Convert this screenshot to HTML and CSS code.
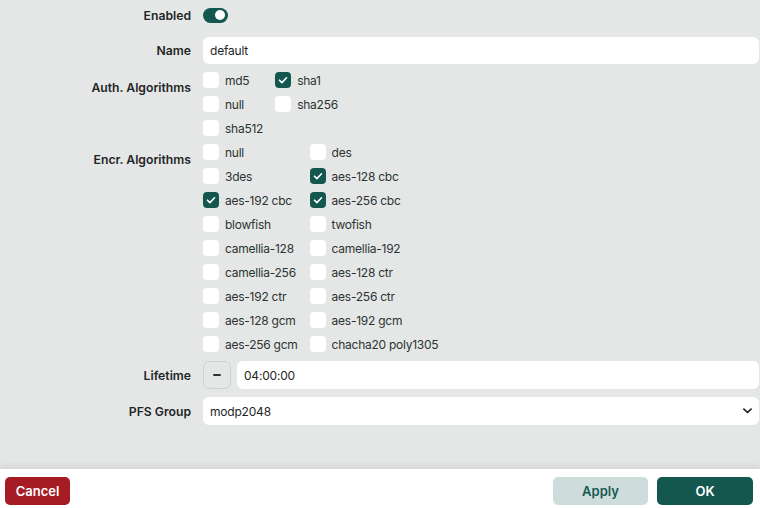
FILE: index.html
```html
<!DOCTYPE html>
<html>
<head>
<meta charset="utf-8">
<link rel="stylesheet" href="styles.css">
</head>
<body>
<div class="page">
  <form class="form">
    <div class="label lbl-mid">Enabled</div>
    <div class="ctl ctl-toggle"><span class="toggle"><span class="knob"></span></span></div>

    <div class="label lbl-mid">Name</div>
    <div class="ctl"><div class="input">default</div></div>

    <div class="label lbl-top">Auth. Algorithms</div>
    <div class="ctl">
      <div class="checks">
        <label class="chk"><span class="box"></span>md5</label>
        <label class="chk"><span class="box on"><svg viewBox="0 0 16 16"><path d="M4.5 8.2l2.4 2.4 4.6-4.8"/></svg></span>sha1</label>
        <label class="chk"><span class="box"></span>null</label>
        <label class="chk"><span class="box"></span>sha256</label>
        <label class="chk"><span class="box"></span>sha512</label>
      </div>
    </div>

    <div class="label lbl-top">Encr. Algorithms</div>
    <div class="ctl ctl-encr">
      <div class="checks">
        <label class="chk"><span class="box"></span>null</label>
        <label class="chk"><span class="box"></span>des</label>
        <label class="chk"><span class="box"></span>3des</label>
        <label class="chk"><span class="box on"><svg viewBox="0 0 16 16"><path d="M4.5 8.2l2.4 2.4 4.6-4.8"/></svg></span>aes-128 cbc</label>
        <label class="chk"><span class="box on"><svg viewBox="0 0 16 16"><path d="M4.5 8.2l2.4 2.4 4.6-4.8"/></svg></span>aes-192 cbc</label>
        <label class="chk"><span class="box on"><svg viewBox="0 0 16 16"><path d="M4.5 8.2l2.4 2.4 4.6-4.8"/></svg></span>aes-256 cbc</label>
        <label class="chk"><span class="box"></span>blowfish</label>
        <label class="chk"><span class="box"></span>twofish</label>
        <label class="chk"><span class="box"></span>camellia-128</label>
        <label class="chk"><span class="box"></span>camellia-192</label>
        <label class="chk"><span class="box"></span>camellia-256</label>
        <label class="chk"><span class="box"></span>aes-128 ctr</label>
        <label class="chk"><span class="box"></span>aes-192 ctr</label>
        <label class="chk"><span class="box"></span>aes-256 ctr</label>
        <label class="chk"><span class="box"></span>aes-128 gcm</label>
        <label class="chk"><span class="box"></span>aes-192 gcm</label>
        <label class="chk"><span class="box"></span>aes-256 gcm</label>
        <label class="chk"><span class="box"></span>chacha20 poly1305</label>
      </div>
    </div>

    <div class="label lbl-mid">Lifetime</div>
    <div class="ctl ctl-row">
      <span class="minus"><span class="dash"></span></span>
      <div class="input grow">04:00:00</div>
    </div>

    <div class="label lbl-mid">PFS Group</div>
    <div class="ctl">
      <div class="input select">modp2048
        <svg class="chev" viewBox="0 0 12 12"><path d="M1.5 4l4.5 4 4.5-4"/></svg>
      </div>
    </div>
  </form>
  <footer class="footer">
    <button type="button" class="btn cancel">Cancel</button>
    <div class="right">
      <button type="button" class="btn apply">Apply</button>
      <button type="button" class="btn ok">OK</button>
    </div>
  </footer>
</div>
</body>
</html>
```
FILE: styles.css
```css
* { box-sizing: border-box; }
html, body { margin: 0; padding: 0; }
body {
  width: 760px;
  height: 508px;
  overflow: hidden;
  background: #e5e7e6;
  font-family: Inter, "Noto Sans", sans-serif;
  font-size: 12px;
  color: #1e2626;
}
.page {
  display: flex;
  flex-direction: column;
  height: 508px;
}
.form {
  flex: 1;
  display: grid;
  grid-template-columns: 191px 1fr;
  column-gap: 12px;
  row-gap: 8px;
  align-content: start;
  padding: 1px 1px 0 0;
}
.label {
  text-align: right;
  font-weight: 600;
  font-size: 12.2px;
  color: #1e2626;
}
.lbl-mid {
  display: flex;
  align-items: center;
  justify-content: flex-end;
}
.lbl-top { padding-top: 8px; line-height: 16px; }
.ctl { min-width: 0; }
.ctl-encr { padding-bottom: 1px; }
.ctl-toggle {
  height: 28px;
  display: flex;
  align-items: center;
}
.toggle {
  width: 25px;
  height: 15px;
  border-radius: 8px;
  background: #14574f;
  position: relative;
  display: inline-block;
}
.knob {
  position: absolute;
  width: 10px;
  height: 10px;
  border-radius: 50%;
  background: #fff;
  right: 3px;
  top: 2.5px;
}
.input {
  height: 27px;
  background: #fff;
  border-radius: 6px;
  padding: 0 7px;
  display: flex;
  align-items: center;
  font-size: 12px;
  letter-spacing: -0.2px;
  color: #1e2626;
}
.ctl-row {
  display: flex;
  gap: 6px;
}
.ctl-row .input { height: 28px; }
.grow { flex: 1; }
.minus {
  width: 28px;
  height: 28px;
  border: 1px solid #cfd2d1;
  border-radius: 6px;
  display: flex;
  align-items: center;
  justify-content: center;
  flex: none;
}
.dash {
  width: 8px;
  height: 2px;
  background: #333;
  border-radius: 1px;
}
.select {
  position: relative;
  height: 28px;
}
.chev {
  position: absolute;
  right: 6px;
  top: 8px;
  width: 11px;
  height: 11px;
  fill: none;
  stroke: #222;
  stroke-width: 1.7;
}
.checks {
  display: inline-grid;
  grid-template-columns: auto auto;
  column-gap: 12px;
  row-gap: 8px;
}
.chk {
  display: flex;
  align-items: center;
  gap: 6px;
  height: 16px;
  white-space: nowrap;
  font-size: 12px;
  letter-spacing: -0.25px;
  color: #2b3333;
}
.box {
  width: 16px;
  height: 16px;
  border-radius: 4px;
  background: #fff;
  flex: none;
  display: flex;
  align-items: center;
  justify-content: center;
}
.box.on { background: #14574f; }
.box svg {
  width: 16px;
  height: 16px;
  fill: none;
  stroke: #fff;
  stroke-width: 1.6;
  stroke-linecap: round;
  stroke-linejoin: round;
}
.footer {
  height: 39px;
  background: #fff;
  box-shadow: 0 -3px 6px rgba(0,0,0,0.08);
  display: flex;
  justify-content: space-between;
  align-items: flex-start;
  padding: 8px 7px 0 5px;
}
.right { display: flex; gap: 9px; }
.btn {
  height: 28px;
  border: none;
  border-radius: 5px;
  font-family: Inter, "Noto Sans", sans-serif;
  font-size: 13px;
  font-weight: 600;
  padding: 0;
}
.cancel { width: 65px; background: #a51c24; color: #fff; }
.apply { width: 95px; background: #cedcdb; color: #155a52; }
.ok { width: 96px; background: #14574f; color: #fff; }
```
